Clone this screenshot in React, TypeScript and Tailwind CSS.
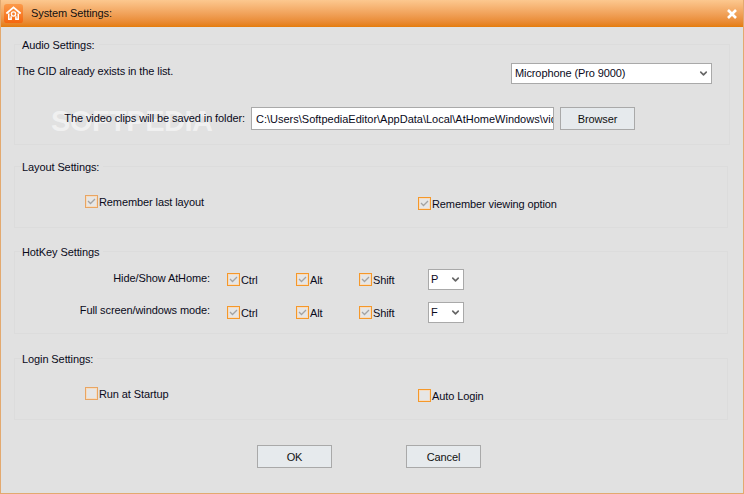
import { ChevronDown } from "lucide-react";

function Check({ label, checked = true, dim = false }: { label: string; checked?: boolean; dim?: boolean }) {
  return (
    <div className="flex items-start">
      <div
        className={`flex h-[13px] w-[13px] shrink-0 border ${dim ? "border-[#e8a563]" : "border-[#f5982a]"}`}
      >
        <div className="flex h-full w-full items-center justify-center border border-[#f6dcc0] bg-[#e6e6e6]">
          {checked && (
            <svg width="9" height="7" viewBox="0 0 9 7" fill="none" stroke="#a3a3a3" strokeWidth="1.3">
              <path d="M1 3l2.5 2.5L8 1" />
            </svg>
          )}
        </div>
      </div>
      <span className="ml-px leading-[14px]">{label}</span>
    </div>
  );
}

function Dropdown({ value, className }: { value: string; className: string }) {
  return (
    <div className={`flex h-[21px] items-center justify-between border border-[#a9a9a9] bg-white pr-[2px] ${className}`}>
      <span>{value}</span>
      <ChevronDown size={11} strokeWidth={3.5} className="text-[#666666]" />
    </div>
  );
}

function Group({ title, className, children }: { title: string; className: string; children: React.ReactNode }) {
  return (
    <fieldset className={`relative z-10 ml-[13px] border border-[#dcdcdc] ${className}`}>
      <legend className="ml-[7px] h-[16px] pr-[4px] leading-[18px]">{title}</legend>
      {children}
    </fieldset>
  );
}

function ActionButton({ label }: { label: string }) {
  return (
    <button className="h-[23px] w-[75px] border border-[#a9a9a9] bg-[#e6eaed] pt-px text-[#111111]">{label}</button>
  );
}

function HotKeyRow({ label, letter, className = "", labelClass = "" }: { label: string; letter: string; className?: string; labelClass?: string }) {
  return (
    <div className={`flex h-[21px] items-center ${className}`}>
      <span className={`w-[195px] text-right ${labelClass}`}>{label}</span>
      <div className="ml-[17px] w-[69px]">
        <Check label="Ctrl" />
      </div>
      <div className="w-[63px]">
        <Check label="Alt" />
      </div>
      <div className="w-[69px]">
        <Check label="Shift" />
      </div>
      <Dropdown value={letter} className="w-[36px] pl-[2px]" />
    </div>
  );
}

export default function App() {
  return (
    <div className="relative h-[494px] w-[744px] overflow-hidden border-x border-b border-[#e3a96f] bg-[#e1e1e1] font-['Liberation_Sans',Arial,sans-serif] text-[11px] tracking-[-0.1px] text-[#0a0a1a]">
      <div className="flex h-[27px] items-center bg-gradient-to-b from-[#fcc88f] to-[#e47c08] pl-[3px] pr-[6px]">
        <svg width="19" height="19" viewBox="0 0 20 20">
          <defs>
            <linearGradient id="logo" x1="0" y1="0" x2="0" y2="1">
              <stop offset="0" stopColor="#fb9a4a" />
              <stop offset="1" stopColor="#f5660f" />
            </linearGradient>
          </defs>
          <rect width="20" height="20" rx="3" fill="url(#logo)" />
          <path d="M2.5 10L10 3.5 17.5 10" fill="none" stroke="#fff" strokeWidth="1.9" />
          <path d="M5 10v6h2.5v-3M15 10v6h-2.5v-3" fill="none" stroke="#fff" strokeWidth="1.6" />
          <circle cx="10" cy="10.5" r="2.2" fill="none" stroke="#fff" strokeWidth="1.4" />
        </svg>
        <span className="ml-[8px] text-[#111111]">System Settings:</span>
        <svg className="ml-auto" width="10" height="10" viewBox="0 0 10 10" stroke="#fff" strokeWidth="2.6">
          <path d="M1 1l8 8M9 1l-8 8" />
        </svg>
      </div>

      <Group title="Audio Settings:" className="mt-[9px] h-[109px] w-[716px]">
        <div className="mt-[11px] flex items-start">
          <span className="w-[496px] pl-px leading-[16px]">The CID already exists in the list.</span>
          <Dropdown value="Microphone (Pro 9000)" className="w-[201px] pl-[3px]" />
        </div>
        <div className="mt-[23px] flex items-center">
          <span className="w-[230px] text-right">The video clips will be saved in folder:</span>
          <input
            readOnly
            value="C:\Users\SoftpediaEditor\AppData\Local\AtHomeWindows\video"
            className="ml-[6px] h-[23px] w-[303px] border border-[#a9a9a9] bg-white pl-[4px] tracking-normal outline-none"
          />
          <div className="ml-[6px]">
            <ActionButton label="Browser" />
          </div>
        </div>
      </Group>

      <Group title="Layout Settings:" className="mt-[13px] h-[70px] w-[714px]">
        <div className="flex pl-[70px] pt-[21px]">
          <div className="w-[333px]">
            <Check label="Remember last layout" dim />
          </div>
          <div className="mt-[2px]">
            <Check label="Remember viewing option" />
          </div>
        </div>
      </Group>

      <Group title="HotKey Settings" className="mt-[15px] h-[91px] w-[714px]">
        <HotKeyRow label="Hide/Show AtHome:" letter="P" className="mt-[10px]" labelClass="pb-[2px]" />
        <HotKeyRow label="Full screen/windows mode:" letter="F" className="mt-[12px]" labelClass="pb-[4px]" />
      </Group>

      <Group title="Login Settings:" className="mt-[16px] h-[70px] w-[714px]">
        <div className="flex pl-[70px] pt-[21px]">
          <div className="w-[333px]">
            <Check label="Run at Startup" checked={false} dim />
          </div>
          <div className="mt-[2px]">
            <Check label="Auto Login" checked={false} />
          </div>
        </div>
      </Group>

      <div className="relative z-10 ml-[256px] mt-[25px] flex gap-[74px]">
        <ActionButton label="OK" />
        <ActionButton label="Cancel" />
      </div>

      {/* watermark, sits under the form text */}
      <div className="pointer-events-none absolute left-[50px] top-[104px] z-0 text-[29px] font-bold leading-[34px] tracking-[-0.5px] text-white/50">
        SOFTPEDIA
      </div>
    </div>
  );
}
